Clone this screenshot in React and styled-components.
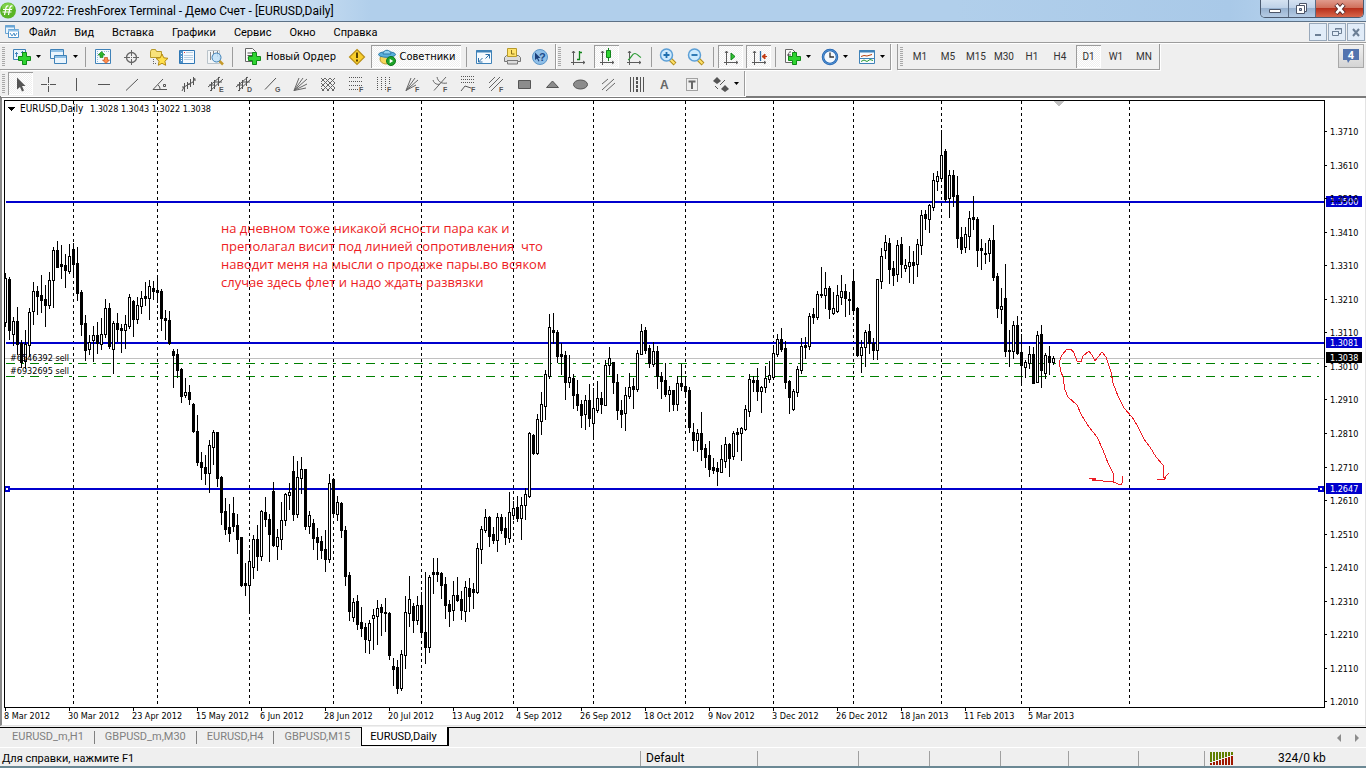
import React from "react";
import styled, { createGlobalStyle, css } from "styled-components";

const UI = `"Roboto", "Liberation Sans", sans-serif`;
const CHART = `"DejaVu Sans Condensed", "DejaVu Sans", sans-serif`;

// [high, body top, body bottom, low, rising]
const candles = [
  [273, 278, 322, 326, 1], [277, 279, 330, 339, 0], [317, 321, 334, 345, 1], [307, 321, 344, 354, 0],
  [340, 343, 362, 367, 0], [330, 344, 361, 368, 1], [308, 312, 345, 356, 1], [282, 291, 311, 324, 1],
  [286, 291, 296, 314, 0], [275, 295, 300, 312, 0], [285, 299, 305, 326, 0], [272, 280, 305, 308, 1],
  [247, 250, 280, 307, 1], [241, 250, 267, 267, 0], [245, 264, 266, 278, 0], [254, 265, 270, 287, 0],
  [244, 256, 271, 273, 1], [243, 249, 264, 275, 0], [247, 263, 293, 300, 0], [290, 292, 324, 335, 0],
  [315, 323, 350, 360, 0], [335, 342, 349, 354, 1], [326, 335, 340, 361, 1], [322, 335, 343, 353, 0],
  [318, 334, 344, 349, 1], [299, 308, 334, 337, 1], [303, 308, 346, 348, 0], [321, 323, 349, 373, 1],
  [313, 323, 329, 341, 0], [324, 328, 330, 352, 0], [315, 324, 330, 348, 1], [294, 297, 326, 328, 1],
  [300, 301, 319, 336, 0], [297, 305, 319, 323, 1], [291, 298, 306, 313, 1], [282, 296, 298, 305, 0],
  [280, 286, 298, 319, 1], [281, 288, 291, 299, 0], [275, 290, 292, 302, 0], [289, 291, 318, 330, 0],
  [310, 318, 320, 339, 0], [311, 320, 343, 344, 0], [349, 351, 355, 387, 0], [349, 354, 370, 377, 0],
  [368, 369, 396, 402, 0], [378, 392, 395, 397, 1], [385, 392, 399, 404, 0], [403, 404, 431, 432, 0],
  [415, 431, 462, 465, 0], [452, 462, 467, 479, 0], [455, 467, 473, 484, 0], [440, 445, 473, 492, 1],
  [430, 432, 447, 464, 1], [432, 432, 478, 486, 0], [476, 477, 512, 524, 0], [498, 511, 529, 534, 0],
  [504, 527, 533, 541, 0], [497, 513, 526, 531, 0], [514, 525, 539, 553, 0], [537, 537, 585, 586, 0],
  [563, 583, 585, 595, 0], [550, 561, 585, 612, 1], [535, 539, 567, 578, 1], [525, 539, 556, 570, 0],
  [510, 511, 556, 560, 1], [497, 512, 519, 526, 0], [514, 519, 534, 561, 0], [482, 491, 545, 546, 0],
  [529, 537, 546, 559, 1], [502, 520, 539, 549, 1], [493, 494, 520, 525, 1], [483, 492, 495, 509, 1],
  [456, 471, 514, 520, 0], [461, 477, 514, 517, 1], [457, 469, 478, 493, 1], [469, 469, 526, 529, 0],
  [511, 515, 526, 533, 1], [519, 523, 538, 549, 0], [528, 537, 542, 559, 0], [536, 541, 550, 558, 0],
  [530, 549, 559, 571, 0], [474, 483, 559, 562, 1], [478, 479, 513, 516, 0], [496, 502, 514, 520, 1],
  [502, 503, 530, 537, 0], [526, 530, 576, 585, 0], [572, 575, 611, 620, 0], [598, 602, 617, 621, 1],
  [595, 601, 624, 629, 0], [607, 622, 628, 636, 0], [623, 627, 639, 652, 0], [620, 623, 640, 653, 1],
  [609, 615, 618, 649, 1], [600, 608, 616, 644, 1], [604, 607, 612, 635, 0], [598, 612, 613, 631, 0],
  [612, 613, 655, 659, 0], [658, 666, 669, 685, 0], [660, 667, 688, 693, 0], [650, 654, 688, 690, 1],
  [596, 612, 655, 668, 1], [576, 599, 613, 626, 1], [603, 606, 620, 632, 0], [596, 605, 620, 624, 1],
  [592, 605, 632, 637, 0], [572, 632, 647, 663, 0], [575, 577, 647, 652, 1], [558, 572, 574, 593, 0],
  [558, 572, 574, 581, 0], [572, 573, 585, 598, 0], [577, 584, 605, 618, 0], [600, 604, 611, 626, 0],
  [581, 595, 610, 620, 1], [577, 595, 600, 601, 0], [591, 599, 610, 619, 0], [581, 587, 611, 621, 1],
  [578, 588, 596, 611, 0], [583, 589, 592, 608, 0], [543, 548, 592, 593, 1], [526, 529, 549, 563, 1],
  [509, 517, 530, 532, 1], [516, 517, 536, 546, 0], [527, 534, 540, 543, 0], [513, 517, 540, 551, 1],
  [514, 517, 530, 533, 0], [517, 528, 537, 544, 0], [492, 512, 538, 542, 1], [501, 508, 515, 519, 1],
  [496, 507, 518, 521, 0], [497, 505, 518, 539, 1], [488, 494, 505, 519, 1], [432, 433, 496, 497, 1],
  [434, 435, 453, 454, 0], [414, 419, 453, 454, 1], [392, 404, 421, 434, 1], [370, 374, 406, 419, 1],
  [314, 327, 376, 378, 1], [313, 330, 332, 343, 0], [330, 332, 356, 362, 0], [343, 354, 356, 374, 0],
  [351, 355, 382, 399, 0], [355, 377, 382, 387, 1], [374, 378, 395, 408, 0], [380, 394, 405, 410, 0],
  [400, 404, 415, 427, 0], [395, 400, 414, 429, 1], [384, 400, 418, 426, 0], [388, 408, 423, 437, 1],
  [381, 398, 410, 412, 1], [392, 398, 404, 413, 0], [360, 365, 405, 405, 1], [347, 358, 365, 374, 1],
  [362, 362, 382, 393, 0], [374, 382, 410, 419, 0], [400, 410, 414, 427, 0], [387, 395, 413, 430, 1],
  [373, 387, 396, 398, 1], [378, 386, 389, 408, 0], [350, 353, 389, 391, 1], [324, 331, 354, 354, 1],
  [327, 330, 350, 353, 0], [345, 348, 363, 367, 0], [342, 351, 364, 366, 1], [346, 351, 376, 388, 0],
  [372, 376, 381, 398, 0], [363, 380, 394, 396, 0], [386, 390, 394, 411, 1], [390, 390, 404, 410, 0],
  [376, 383, 404, 410, 1], [364, 383, 386, 390, 0], [376, 386, 391, 395, 0], [387, 390, 427, 432, 0],
  [423, 432, 440, 450, 0], [429, 433, 440, 451, 1], [412, 433, 449, 460, 0], [444, 448, 457, 467, 0],
  [441, 455, 469, 476, 0], [458, 467, 470, 473, 0], [462, 468, 471, 485, 0], [445, 459, 472, 472, 1],
  [437, 444, 461, 467, 1], [443, 444, 458, 476, 0], [431, 433, 456, 459, 1], [428, 432, 434, 451, 0],
  [427, 428, 433, 460, 1], [405, 409, 429, 430, 1], [374, 379, 411, 416, 1], [376, 380, 382, 391, 0],
  [368, 380, 391, 400, 0], [386, 387, 391, 412, 1], [366, 378, 387, 392, 1], [361, 375, 379, 382, 1],
  [345, 353, 377, 378, 1], [334, 339, 354, 356, 1], [328, 339, 349, 351, 0], [341, 348, 382, 388, 0],
  [380, 381, 397, 413, 0], [389, 391, 409, 410, 1], [366, 369, 392, 396, 1], [338, 346, 370, 373, 1],
  [337, 345, 347, 358, 0], [313, 316, 346, 349, 1], [308, 314, 317, 323, 0], [291, 294, 317, 319, 1],
  [267, 294, 295, 297, 0], [272, 288, 295, 308, 1], [286, 288, 309, 318, 0], [292, 308, 313, 314, 1],
  [285, 295, 311, 312, 1], [275, 291, 297, 304, 1], [284, 291, 298, 316, 0], [292, 299, 300, 314, 0],
  [272, 281, 310, 314, 0], [307, 308, 355, 356, 0], [340, 347, 355, 372, 1], [330, 332, 347, 366, 1],
  [324, 331, 343, 353, 0], [338, 343, 350, 359, 0], [279, 279, 350, 359, 1], [248, 256, 281, 288, 1],
  [235, 242, 250, 258, 1], [238, 243, 269, 283, 0], [261, 268, 275, 285, 0], [240, 245, 274, 281, 1],
  [237, 244, 264, 277, 0], [259, 265, 268, 271, 1], [246, 262, 266, 282, 1], [251, 262, 265, 283, 0],
  [239, 244, 264, 276, 1], [210, 215, 245, 254, 1], [210, 214, 218, 229, 0], [204, 205, 219, 232, 1],
  [173, 180, 207, 210, 1], [171, 176, 181, 190, 1], [130, 155, 178, 181, 1], [149, 151, 199, 201, 0],
  [170, 175, 198, 217, 1], [170, 175, 196, 206, 0], [176, 195, 238, 247, 0], [227, 237, 249, 253, 0],
  [227, 234, 247, 252, 1], [211, 218, 236, 249, 1], [196, 217, 219, 229, 0], [217, 219, 250, 266, 0],
  [239, 248, 250, 269, 0], [243, 253, 254, 263, 0], [238, 240, 253, 261, 1], [225, 240, 277, 280, 0],
  [273, 276, 308, 317, 0], [288, 306, 309, 323, 1], [264, 298, 351, 356, 0], [330, 350, 351, 366, 0],
  [321, 325, 351, 358, 1], [316, 325, 353, 354, 0], [334, 352, 365, 385, 0], [360, 362, 367, 377, 1],
  [346, 354, 363, 368, 1], [347, 354, 383, 383, 0], [331, 335, 382, 382, 1], [325, 334, 370, 387, 0],
  [353, 355, 373, 378, 1], [346, 356, 362, 374, 0], [356, 358, 362, 364, 1],
];

const months = [73, 157, 249, 333, 421, 513, 593, 685, 773, 853, 941, 1021, 1129];
const levels = [201, 342, 488];
const orders = [
  { id: "#6546392 sell", y: 363 },
  { id: "#6932695 sell", y: 376 },
];
const note = [
  "на дневном тоже никакой ясности пара как и",
  "преполагал висит под линией сопротивления  что",
  "наводит меня на мысли о продаже пары.во всяком",
  "случае здесь флет и надо ждать развязки",
];
const prices = [
  "1.3710", "1.3610", "1.3510", "1.3410", "1.3310", "1.3210", "1.3110", "1.3010", "1.2910",
  "1.2810", "1.2710", "1.2610", "1.2510", "1.2410", "1.2310", "1.2210", "1.2110", "1.2010",
];
const tags = [
  { text: "1.3500", y: 202, fill: "#0000cd" },
  { text: "1.3081", y: 343, fill: "#0000cd" },
  { text: "1.3038", y: 358, fill: "#000" },
  { text: "1.2647", y: 489, fill: "#0000cd" },
];
const dates = [
  "8 Mar 2012", "30 Mar 2012", "23 Apr 2012", "15 May 2012", "6 Jun 2012", "28 Jun 2012", "20 Jul 2012",
  "13 Aug 2012", "4 Sep 2012", "26 Sep 2012", "18 Oct 2012", "9 Nov 2012", "3 Dec 2012", "26 Dec 2012",
  "18 Jan 2013", "11 Feb 2013", "5 Mar 2013",
];
const menu = ["Файл", "Вид", "Вставка", "Графики", "Сервис", "Окно", "Справка"];
const frames = ["M1", "M5", "M15", "M30", "H1", "H4", "D1", "W1", "MN"];
const tabs = ["EURUSD_m,H1", "GBPUSD_m,M30", "EURUSD,H4", "GBPUSD,M15", "EURUSD,Daily"];

const Icon = ({ children, size = 20 }) => (
  <svg width={size} height={size} viewBox={`0 0 ${size} ${size}`} fill="none" aria-hidden="true">
    {children}
  </svg>
);

const Plus = () => (
  <path d="M9.5 5.5h4v4h4v4h-4v4h-4v-4h-4v-4h4z" fill="#2fd431" stroke="#118a18" />
);
const Axes = () => (
  <path d="M5.500 4v14M3 15.500h14M4 6l1.500-2 1.500 2M15 14l2 1.500-2 1.500" stroke="#5a5a5a" />
);
const Lens = ({ minus }) => (
  <>
    <path d="M12 12l5 5" stroke="#b08a1a" strokeWidth="4" />
    <path d="M12 12l4.500 4.500" stroke="#ffe36b" strokeWidth="2" />
    <circle cx="8.500" cy="8" r="6" fill="#cdeafd" stroke="#5c9fd6" strokeWidth="1.500" />
    <path d={minus ? "M5.500 8h6" : "M5.500 8h6M8.500 5v6"} stroke="#1f6fae" strokeWidth="1.800" />
  </>
);
const F = ({ ch = "F" }) => (
  <text x="13" y="18" fontSize="7" fontWeight="700" fontFamily="Liberation Sans, sans-serif" fill="#555">
    {ch}
  </text>
);

const MAIN = {
  newChart: (
    <>
      <path d="M.5 2.500h12v10H.5z" fill="#eaf5fd" stroke="#3f82b8" />
      <path d="M3.500 5v5M2 6.500h3M9.500 4v5M8 5.500h3" stroke="#3f82b8" />
      <Plus />
    </>
  ),
  profiles: (
    <>
      <path d="M.5 2.500h13v9h-13z" fill="#eaf5fd" stroke="#3f82b8" />
      <path d="M1 4h12" stroke="#8fc0e6" strokeWidth="2" />
      <path d="M4.500 8.500h12v8h-12z" fill="#eaf5fd" stroke="#3f82b8" />
      <path d="M5 10h11" stroke="#8fc0e6" strokeWidth="2" />
    </>
  ),
  market: (
    <>
      <path d="M2.500 2.500h15v14h-15z" fill="#f5fafe" stroke="#3f82b8" />
      <path d="M4.500 4v12M9 4.500h8" stroke="#8fb8d8" strokeDasharray="1 1" />
      <path d="M8.500 4.500l3.500 3.500h-2v2.500H7V8H5z" fill="#2bb52d" stroke="#137a18" strokeWidth=".6" />
      <path d="M13 16.500l3.500-3.500h-2v-2.500h-3V13h-2z" fill="#ff8b4a" stroke="#b5400d" strokeWidth=".6" />
    </>
  ),
  data: (
    <>
      <circle cx="10.500" cy="10.500" r="5" stroke="#666" strokeWidth="1.300" />
      <path d="M10.500 3v6M10.500 12v6M3 10.500h6M12 10.500h6M10 10.500h1" stroke="#666" />
    </>
  ),
  navigator: (
    <>
      <path d="M1.500 4.500l1-2h4l1 2h5v6h-11z" fill="#f8e27a" stroke="#b79a2b" />
      <path d="M4.500 12v5M4 16.500h4" stroke="#666" strokeDasharray="1 1" />
      <path d="M13 7l1.800 3.800 4.200.5-3.100 2.900.8 4.100-3.700-2-3.700 2 .8-4.100L7 11.300l4.200-.5z" fill="#ffe14d" stroke="#b58a12" />
    </>
  ),
  terminal: (
    <>
      <path d="M2.500 3.500h15v13h-15z" fill="#f5faff" stroke="#2f77b4" />
      <path d="M3 4h3v12H3z" fill="#4d90c8" />
      <path d="M4.500 6v2M4.500 9v5" stroke="#fff" strokeDasharray="1 1" />
      <path d="M7 5.500h1" stroke="#e33" />
      <path d="M9 5.500h7M7 8.500h9M7 10.500h9M7 12.500h9" stroke="#b9d0e2" />
    </>
  ),
  tester: (
    <>
      <path d="M2.500 3.500h12v13h-12z" fill="#f2f5f7" stroke="#b9c3ca" />
      <path d="M5.500 5v8M8.500 4v5M12.500 4v6" stroke="#888" />
      <path d="M14 13.500l4 4" stroke="#c69a2b" strokeWidth="2.500" />
      <circle cx="11.500" cy="10.500" r="4.500" fill="#bfe0f8" fillOpacity=".85" stroke="#3f82b8" />
    </>
  ),
  order: (
    <>
      <path d="M2.500 1.500h7l3 3v10h-10z" fill="#fafafa" stroke="#666" />
      <path d="M4.500 6h6M4.500 8.500h6M4.500 11h5" stroke="#555" />
      <Plus />
    </>
  ),
  warn: (
    <>
      <path d="M10 2.500l7.500 7.500-7.500 7.500L2.500 10z" fill="#f9cf2c" stroke="#b9901a" strokeWidth="1.200" />
      <path d="M10 5.500v5.500M10 12.500v2" stroke="#5a4300" strokeWidth="2" />
    </>
  ),
  expert: (
    <>
      <ellipse cx="9" cy="12" rx="6" ry="5" fill="#f6d65a" stroke="#b79a2b" />
      <ellipse cx="10" cy="7.500" rx="8.500" ry="2.800" fill="#5ab0dc" stroke="#2c7ba8" />
      <path d="M6 7c0-5 8-5 8 0z" fill="#8fd0ef" stroke="#2c7ba8" />
      <circle cx="14" cy="14" r="4.500" fill="#1ea32a" stroke="#0e7a18" />
      <path d="M12.700 11.800l3.500 2.200-3.500 2.200z" fill="#fff" />
    </>
  ),
  full: (
    <>
      <path d="M2.500 3.500h15v13h-15z" fill="#f5fafe" stroke="#3f82b8" />
      <path d="M2 4.500h16" stroke="#3f82b8" strokeWidth="2" />
      <path d="M11.500 7.500h4v4M15.500 7.500l-4 4M4.500 11v4h4M4.500 15l4-4" stroke="#2b6ea8" />
    </>
  ),
  print: (
    <>
      <path d="M4.500 8.500h12l2 2v4h-3v2.500h-10v-2.500h-3v-4z" fill="#dcdcdc" stroke="#777" />
      <path d="M5.500 1.500h9v8h-9z" fill="#ffe36b" stroke="#b79a2b" />
      <path d="M9.500 3v4h3" stroke="#8c7218" />
      <path d="M5 13.500h11" stroke="#777" />
    </>
  ),
  help: (
    <>
      <circle cx="10" cy="10" r="7.500" fill="#8fbfe8" stroke="#5c96c8" />
      <path d="M5 5.500v7.500l2-1.500 1.500 3 1-.5-1.500-3h2.500z" fill="#1b3f7a" />
      <text x="9" y="14" fontSize="11" fontWeight="700" fontFamily="Liberation Sans, sans-serif" fill="#1b4c8c">?</text>
    </>
  ),
  bars: (
    <>
      <Axes />
      <path d="M11.500 4v9M11 5.500h3M9 12.500h3" stroke="#11841a" strokeWidth="1.300" />
    </>
  ),
  candles: (
    <>
      <Axes />
      <path d="M11.500 1v13" stroke="#11841a" />
      <path d="M9.500 3.500h4v7h-4z" fill="#2fd431" stroke="#11841a" />
    </>
  ),
  line: (
    <>
      <Axes />
      <path d="M4 13c3-1 4-7 7-6.500s3 2.500 6 4" stroke="#2a9a34" strokeWidth="1.200" />
    </>
  ),
  zoomIn: <Lens />,
  zoomOut: <Lens minus />,
  scroll: (
    <>
      <Axes />
      <path d="M10 6v7l4-3.500z" fill="#2fc431" stroke="#11841a" />
    </>
  ),
  shift: (
    <>
      <Axes />
      <path d="M11.500 4v10" stroke="#2b6ea8" strokeWidth="1.300" />
      <path d="M18 9.500h-4M16 7l-3 2.500 3 2.500z" stroke="#c23b12" fill="#c23b12" />
    </>
  ),
  indicators: (
    <>
      <path d="M2.500 2.500h7l3 3v10h-10z" fill="#fafafa" stroke="#666" />
      <path d="M8 5c-2-.5-2.500 1-2.500 3v4M4 8h4" stroke="#555" />
      <Plus />
    </>
  ),
  clock: (
    <>
      <circle cx="10" cy="10" r="7" fill="#f4f9fd" stroke="#1d5fae" strokeWidth="2.500" />
      <circle cx="10" cy="10" r="7" stroke="#69a9e2" strokeWidth=".8" />
      <path d="M10 5.500V10h4" stroke="#333" strokeWidth="1.300" />
    </>
  ),
  template: (
    <>
      <path d="M2.500 3.500h15v13h-15z" fill="#f8fcff" stroke="#3f82b8" />
      <path d="M2 4.500h16" stroke="#3f82b8" strokeWidth="2" />
      <path d="M2 11.500h16" stroke="#3f82b8" />
      <path d="M4 9.500l3-1 3 .5 5-1.500" stroke="#b5400d" />
      <path d="M4 14.500l3-1.500 3 1.500 3-2 3 1" stroke="#2a9a34" />
    </>
  ),
};

const DRAW = [
  ["Курсор", <path d="M6 3.500v12l3-2.500 2 4.500 2-1-2-4.500h3.500z" fill="#555" />],
  ["Перекрестие", <path d="M3 10.500h6M12 10.500h6M10.500 3v6M10.500 12v6M10 10.500h1" stroke="#555" />],
  ["Вертикальная линия", <path d="M10.500 4v13" stroke="#555" />],
  ["Горизонтальная линия", <path d="M4 10.500h12" stroke="#555" />],
  ["Трендовая линия", <path d="M4 16.500L16 5" stroke="#555" />],
  ["Трендовая линия по углу", <path d="M13 5L3 15.500h14M8 11c1.500 1 2 3 2 4M13.500 10.500h2v2h-2z" stroke="#555" />],
  ["Регрессия", <path d="M4 17l2-4 9-5 2-4M6.500 9v9M9.500 8v7M12.500 5v8M15.500 3v8M4 13h3M9 10h3M15 6h3" stroke="#555" />],
  ["Равноудаленный канал", <><path d="M2 13L14 3M4 17L17 5M5.500 8v9M8.500 6v9M12.500 3v9M3 11h6M9 8h7" stroke="#555" /><F ch="E" /></>],
  ["Канал отклонений", <><path d="M2 13L14 3M4 17L17 5M5.500 8v9M8.500 6v9M12.500 3v9M3 11h6M9 8h7" stroke="#555" /><F ch="D" /></>],
  ["Линия Ганна", <><path d="M3 15.500L14 4" stroke="#555" /><F ch="G" /></>],
  ["Веер Ганна", <path d="M4 16.500L9 4M4 16.500L13 4M4 16.500L17 5M4 16.500L17 10M4 16.500L16 14" stroke="#666" />],
  ["Сетка Ганна", <path d="M3 4l13 13M3 9l8 8M7 4l10 10M12 4l5 5M3 14l3 3M3 8l4-4M3 13l9-9M4 17L17 4M9 17l8-8M14 17l3-3" stroke="#666" />],
  ["Линии Фибоначчи", <><path d="M3 3.500h14M3 7.500h14M3 11.500h14M3 15.500h9" stroke="#555" strokeDasharray="1 1" /><F /></>],
  ["Временные зоны Фибоначчи", <><path d="M3.500 3v13M7.500 3v13M11.500 3v13M15.500 3v8" stroke="#555" strokeDasharray="1 1" /><F /></>],
  ["Веер Фибоначчи", <><path d="M4 16.500L9 4M4 16.500L13 4M4 16.500L16 6M4 16.500L14 11" stroke="#666" /><F /></>],
  ["Дуги Фибоначчи", <><path d="M4 16.500L16 3M3 6c1 4 5 5 7 4M7 3c1 5 5 7 10 6" stroke="#666" /><F /></>],
  ["Расширение Фибоначчи", <><path d="M3 2.500h14M3 5.500h14M3 8.500h14" stroke="#555" strokeDasharray="1 1" /><path d="M3 17l4-5 6 2" stroke="#555" /><F /></>],
  ["Канал Фибоначчи", <><path d="M3 9l6-6M3 14L14 3M5 17L17 5" stroke="#666" /><F /></>],
  ["Прямоугольник", <path d="M4.500 6.500h12v8h-12z" fill="#8c8c8c" stroke="#555" />],
  ["Треугольник", <path d="M10.500 7l6 6.500h-12z" fill="#8c8c8c" stroke="#555" />],
  ["Эллипс", <ellipse cx="10.500" cy="10.500" rx="7" ry="4.500" fill="#8c8c8c" stroke="#555" />],
  ["Вилы Эндрюса", <path d="M4 10l6-5M4 16L16 5M8 17l9-8" stroke="#666" />],
  ["Циклические линии", <><path d="M4.500 3v15M7.500 3v15M14.500 3v15M17.500 3v15" stroke="#555" /><path d="M11 3v15" stroke="#555" strokeWidth="2" strokeDasharray="3 1" /></>],
  ["Текст", <text x="6" y="15" fontSize="12" fontWeight="700" fontFamily="Liberation Sans, sans-serif" fill="#666">A</text>],
  ["Текстовая метка", <><path d="M4.500 4.500h11v12h-11z" stroke="#555" strokeDasharray="1 1" /><path d="M6.500 7.500h7M10 7v8" stroke="#666" strokeWidth="2" /></>],
];

export default function App() {
  return (
    <>
      <Global />
      <Window>
        <TitleBar>
          <AppLogo />
          <Title>209722: FreshForex Terminal - Демо Счет - [EURUSD,Daily]</Title>
          <WinButtons>
            <WinButton aria-label="Свернуть">
              <svg width="14" height="12"><path d="M1.500 6.500h11v3h-11z" fill="#fff" stroke="#4c5568" /></svg>
            </WinButton>
            <WinButton aria-label="Развернуть">
              <svg width="14" height="13">
                <path d="M4.500 1.500h7v8h-7z" fill="#fff" stroke="#4c5568" />
                <path d="M1.500 3.500h8v8h-8z" fill="#fff" stroke="#4c5568" />
                <path d="M4.500 6.500h2v2h-2z" stroke="#4c5568" fill="#a8bdd6" />
              </svg>
            </WinButton>
            <WinButton $close aria-label="Закрыть">
              <svg width="14" height="12">
                <path d="M3 1.500l8 9M11 1.500l-8 9" stroke="#5a2a2a" strokeWidth="4.500" />
                <path d="M3.300 1.800l7.400 8.400M10.700 1.800l-7.400 8.400" stroke="#fff" strokeWidth="2.600" />
              </svg>
            </WinButton>
          </WinButtons>
        </TitleBar>

        <MenuBar>
          <ChartLogo />
          {menu.map((m) => (
            <MenuItem key={m}>{m}</MenuItem>
          ))}
          <MdiButtons>
            <MdiButton aria-label="Свернуть окно">
              <svg width="12" height="12"><path d="M3 9h6" stroke="#6c7f95" strokeWidth="2" /></svg>
            </MdiButton>
            <MdiButton aria-label="Восстановить окно">
              <svg width="12" height="12" fill="none">
                <path d="M4.500 4V2.500h6v5H8M1.500 5.500h6v4h-6zM4 3h7M1 5.500h7" stroke="#6c7f95" />
              </svg>
            </MdiButton>
            <MdiButton aria-label="Закрыть окно">
              <svg width="12" height="12"><path d="M3 3l6 7M9 3l-6 7" stroke="#6c7f95" strokeWidth="2" /></svg>
            </MdiButton>
          </MdiButtons>
        </MenuBar>

        <ToolRow>
          <Group>
            <Grip $wide />
            <Tool icon="newChart" label="Новый график" drop />
            <Tool icon="profiles" label="Профили" drop />
            <Sep $wide />
            <Tool icon="market" label="Обзор рынка" />
            <Tool icon="data" label="Окно данных" />
            <Tool icon="navigator" label="Навигатор" />
            <Tool icon="terminal" label="Терминал" />
            <Tool icon="tester" label="Тестер стратегий" />
            <Sep $wide />
            <TextTool $width={107}>
              <Icon>{MAIN.order}</Icon>
              Новый Ордер
            </TextTool>
            <Tool icon="warn" label="MetaEditor" />
            <TextTool $width={90} $on>
              <Icon>{MAIN.expert}</Icon>
              Советники
            </TextTool>
            <Sep $wide />
            <Tool icon="full" label="Полный экран" />
            <Tool icon="print" label="Печать" />
            <Tool icon="help" label="Помощь" />
          </Group>
          <Group>
            <Grip $wide />
            <Tool icon="bars" label="Бары" />
            <Tool icon="candles" label="Свечи" on />
            <Tool icon="line" label="Линия" />
            <Sep />
            <Tool icon="zoomIn" label="Увеличить" />
            <Tool icon="zoomOut" label="Уменьшить" />
            <Sep />
            <Tool icon="scroll" label="Автопрокрутка" on />
            <Tool icon="shift" label="Сдвиг графика" on />
            <Sep />
            <Tool icon="indicators" label="Индикаторы" drop />
            <Tool icon="clock" label="Периоды" drop />
            <Tool icon="template" label="Шаблоны" drop />
          </Group>
          <Group $apart>
            <Grip $wide />
            {frames.map((f) => (
              <ToolButton key={f} $on={f === "D1"}>{f}</ToolButton>
            ))}
          </Group>
          <NewsButton aria-label="Сообщения">
            <svg width="18" height="18">
              <path d="M1 2h16v11H8l-2 3-1-3H1z" fill="#5273ae" />
              <text x="9" y="12" textAnchor="middle" fontSize="11" fontWeight="700" fill="#fff">4</text>
            </svg>
          </NewsButton>
        </ToolRow>

        <ToolRow $last>
          <Group $last>
            <Grip />
            {DRAW.map(([label, drawing], i) => (
              <ToolButton key={label} aria-label={label} $on={i === 0}>
                <Icon>{drawing}</Icon>
              </ToolButton>
            ))}
            <ToolButton $drop aria-label="Стрелки">
              <Icon>
                <path d="M6 3l4 4-4 3-4-3zM14 18l-4-3 4-4 4 4z" fill="#555" />
                <path d="M4 12l3 3M9 11l5-5" stroke="#555" />
              </Icon>
              <Arrow />
            </ToolButton>
          </Group>
        </ToolRow>

        <ChartWindow>
          <Plot>
            <Chart />
          </Plot>
          <PriceAxis />
          <DateAxis>
            {dates.map((d) => (
              <DateLabel key={d}>{d}</DateLabel>
            ))}
          </DateAxis>
        </ChartWindow>

        <TabBar>
          {tabs.map((t, i) => (
            <Tab key={t} $active={i === 4} $rule={i < 3}>{t}</Tab>
          ))}
          <TabScroll>
            <ScrollButton aria-label="Назад"><svg width="5" height="8"><path d="M4 0v8L0 4z" fill="#8c8c8c" /></svg></ScrollButton>
            <ScrollButton aria-label="Вперед"><svg width="5" height="8"><path d="M1 0v8l4-4z" fill="#8c8c8c" /></svg></ScrollButton>
          </TabScroll>
        </TabBar>

        <StatusBar>
          <StatusText>Для справки, нажмите F1</StatusText>
          <StatusCell $width={117}>Default</StatusCell>
          <StatusCell $width={101} />
          <StatusCell $width={71} />
          <StatusCell $width={71} />
          <StatusCell $width={68} />
          <StatusCell $width={70} />
          <StatusCell $width={66} />
          <StatusCell $width={162}>
            <Signal />
            <Traffic>324/0 kb</Traffic>
          </StatusCell>
        </StatusBar>
      </Window>
    </>
  );
}

function Tool({ icon, label, drop, on }) {
  return (
    <ToolButton aria-label={label} $drop={drop} $on={on}>
      <Icon>{MAIN[icon]}</Icon>
      {drop && <Arrow />}
    </ToolButton>
  );
}

function Arrow() {
  return (
    <svg width="5" height="3" aria-hidden="true">
      <path d="M0 0h5L2.500 3z" fill="#000" />
    </svg>
  );
}

function AppLogo() {
  return (
    <svg width="17" height="17" viewBox="0 0 17 17" fill="none" aria-hidden="true">
      <circle cx="8" cy="8.500" r="8" fill="#58b527" />
      <ellipse cx="8" cy="5" rx="6" ry="4" fill="#8fdc5a" fillOpacity=".7" />
      <path d="M8.500 4c-2-.5-2.500 1-3 4l-1 5M12.500 4c-2-.5-2.500 1-3 4l-1 5M3 7.500h9M2.500 10h9" stroke="#fff" strokeWidth="1.200" />
    </svg>
  );
}

function ChartLogo() {
  return (
    <svg width="16" height="16" fill="none" aria-hidden="true">
      <path d="M1.500 1.500h9v8h-9z" fill="#eaf5fd" stroke="#6ba5d3" />
      <path d="M1 2.500h10" stroke="#6ba5d3" strokeWidth="2" />
      <path d="M4.500 5.500h10v8h-10z" fill="#fff" stroke="#4f93c9" />
      <path d="M4 6.500h11" stroke="#8fc0e6" strokeWidth="2" />
      <path d="M6 9l2 3 2-3 1 3 2-3" stroke="#4f93c9" />
    </svg>
  );
}

function Signal() {
  return (
    <svg width="24" height="13" shapeRendering="crispEdges" aria-hidden="true">
      {[...Array(8)].map((_, i) => (
        <g key={i}>
          <rect x={i * 3} y="0" width="2" height={10 - i} fill="#5f7f00" />
          <rect x={i * 3} y={11 - i} width="2" height={2 + i} fill="#a01800" />
        </g>
      ))}
    </svg>
  );
}

function Chart() {
  return (
    <svg width="100%" height="100%">
      {/* chart space starts at (5, 101), one candle every 4px */}
      <g transform="translate(-5 -101)" shapeRendering="crispEdges">
        <g fontSize="13" fontFamily="Open Sans, Noto Sans, sans-serif" fill="#ed1c24">
          {note.map((line, i) => (
            <text key={line} x="221" y={233 + i * 18} xmlSpace="preserve">{line}</text>
          ))}
        </g>
        {months.map((x) => (
          <line key={x} x1={x + 0.5} x2={x + 0.5} y1="101" y2="120%" stroke="#000" strokeDasharray="3 3" />
        ))}
        <rect x="5" y="358" width="101%" height="1" fill="#c0c0c0" />
        {orders.map((o) => (
          <line key={o.id} x1="6" x2="100%" y1={o.y + 0.5} y2={o.y + 0.5} stroke="#008000" strokeDasharray="9 6 3 6" />
        ))}
        {levels.map((y) => (
          <rect key={y} x="6" y={y} width="101%" height="2" fill="#0000cd" />
        ))}
        {candles.map(([high, top, bottom, low, up], i) => {
          const x = 5 + i * 4;
          return (
            <g key={i}>
              <rect x={x} y={high} width="1" height={low - high + 1} />
              <rect x={x - 1} y={top} width="3" height={bottom - top + 1} />
              {up === 1 && <rect x={x} y={top + 1} width="1" height={bottom - top - 1} fill="#fff" />}
            </g>
          );
        })}
        <rect x="5" y="487" width="4" height="4" fill="#fff" stroke="#0000cd" strokeWidth="2" />
        <svg x="100%" width="10" height="900" overflow="visible">
          <rect x="0" y="487" width="4" height="4" fill="#fff" stroke="#0000cd" strokeWidth="2" />
        </svg>
        <path d="M1053 101h11l-5 5h-1z" fill="#c0c0c0" />
        <g stroke="#ed1c24" fill="none">
          <path d="M1059 362L1062 355L1067 349L1071 349L1074 353L1077 361L1081 362L1083 356L1089 351L1092 355L1095 361L1098 357L1102 352L1106 357L1111 372L1113 383L1118 396L1124 408L1132 417L1137 425L1144 439L1150 447L1156 457L1163 465L1163 476L1164 478L1169 473M1157 479L1164 480L1166 477" />
          <path d="M1059 362L1061 372L1063 377L1065 390L1068 397L1077 405L1082 416L1089 427L1097 437L1103 450L1108 463L1113 473L1113 482M1089 478L1096 479L1092 480L1103 481L1113 482L1121 485L1122 483L1122 476" />
        </g>
        <path d="M8 107h7l-3 4h-1z" />
        <text x="20" y="112" fontSize="10">EURUSD,Daily</text>
        <text x="90" y="112">1.3028 1.3043 1.3022 1.3038</text>
        {orders.map((o) => (
          <text key={o.id} x="10" y={o.y - 2}>{o.id}</text>
        ))}
      </g>
    </svg>
  );
}

function PriceAxis() {
  return (
    <AxisSvg>
      {tags.map((t) => (
        <g key={t.text}>
          <rect x="1" y={t.y - 106} width="36" height="11" fill={t.fill} />
          <text x="5" y={t.y - 97} fill="#fff">{t.text}</text>
        </g>
      ))}
      {prices.map((p, i) => {
        const y = Math.round(31 + i * 33.55);
        return (
          <g key={p}>
            <rect x="0" y={y} width="2" height="1" />
            <text x="5" y={y + 4}>{p}</text>
          </g>
        );
      })}
    </AxisSvg>
  );
}

const Global = createGlobalStyle`
  * {
    box-sizing: border-box;
  }
  body {
    margin: 0;
    overflow: hidden;
    font-family: ${UI};
    font-size: 12px;
    color: #000;
    background: #f0f0f0;
  }
  button {
    font: inherit;
    color: inherit;
    background: none;
    border: 0;
    padding: 0;
    margin: 0;
  }
  svg {
    display: block;
    flex-shrink: 0;
  }
`;

const pressed = css`
  background: repeating-conic-gradient(#fff 0 25%, #efefef 0 50%) 0 0 / 2px 2px;
  box-shadow: inset 1px 1px #9c9c9c, inset -1px -1px #fff;
`;

const Window = styled.div`
  display: flex;
  flex-direction: column;
  height: 100vh;
  background: #efefef;
  border-bottom: 2px solid #6b8894;
`;

const TitleBar = styled.header`
  display: flex;
  align-items: center;
  gap: 4px;
  height: 22px;
  background: linear-gradient(90deg, #d9e8f6 0, #cfe1f3 280px, #b1cfeb 370px, #b1cfeb 70%, #a9c9e8 90%, #c3daf0 100%);
  border-bottom: 1px solid #5d7186;
`;

const Title = styled.span`
  font-size: 12px;
  white-space: nowrap;
`;

const WinButtons = styled.div`
  display: flex;
  align-self: flex-start;
  margin-left: auto;
  margin-right: 2px;
  border: 1px solid #4b5a70;
  border-top: 0;
  border-radius: 0 0 5px 5px;
  overflow: hidden;
`;

const WinButton = styled.button`
  display: flex;
  align-items: center;
  justify-content: center;
  width: ${(p) => (p.$close ? 48 : 27)}px;
  height: 17px;
  background: ${(p) =>
    p.$close
      ? "linear-gradient(#e09a8c 0, #d0705c 45%, #b8301c 50%, #d8664a 100%)"
      : "linear-gradient(#d5e2f1 0, #bfd2e8 45%, #98b2d0 50%, #b5cbe4 100%)"};

  & + & {
    border-left: 1px solid #5b6c84;
  }
`;

const MenuBar = styled.nav`
  display: flex;
  align-items: center;
  height: 21px;
  padding-left: 4px;
  border-bottom: 1px solid #9c9c9c;
`;

const MenuItem = styled.button`
  height: 20px;
  padding: 0 9px;
  font-size: 11px;
`;

const MdiButtons = styled.div`
  display: flex;
  gap: 1px;
  margin-left: auto;
  margin-right: 1px;
`;

const MdiButton = styled.button`
  display: flex;
  align-items: center;
  justify-content: center;
  width: 18px;
  height: 18px;
  border: 1px solid #98a8ba;
  background: #e1ecf8;
`;

const ToolRow = styled.div`
  display: flex;
  height: ${(p) => (p.$last ? 27 : 28)}px;
  border-top: ${(p) => (p.$last ? 0 : "1px solid #fff")};
  border-bottom: ${(p) => (p.$last ? "2px solid #7a7a7a" : 0)};
`;

const Group = styled.div`
  display: flex;
  align-items: center;
  height: ${(p) => (p.$last ? 25 : 26)}px;
  margin-left: ${(p) => (p.$apart ? 6 : 0)}px;
  padding-right: 1px;
  border-left: ${(p) => (p.$apart ? "1px solid #9c9c9c" : 0)};
  border-right: 1px solid #9c9c9c;
  border-bottom: ${(p) => (p.$last ? 0 : "1px solid #9c9c9c")};
  box-shadow: 1px 1px #fff;
`;

const Grip = styled.span`
  width: 3px;
  height: 19px;
  margin: 0 ${(p) => (p.$wide ? 3 : 1)}px 0 2px;
  background: repeating-linear-gradient(#a8a8a8 0 1px, #efefef 1px 2px);
`;

const Sep = styled.span`
  width: 1px;
  height: 20px;
  margin: 0 ${(p) => (p.$wide ? 3 : 2)}px 0 3px;
  background: #9c9c9c;
`;

const ToolButton = styled.button`
  display: flex;
  align-items: center;
  justify-content: center;
  gap: 3px;
  width: ${(p) => (p.$drop ? 37 : 28)}px;
  height: 23px;
  color: #333;
  font-size: 10px;
  ${(p) =>
    p.$on &&
    css`
      ${pressed}
      width: 25px;
      margin: 0 1px 0 2px;
    `}
`;

const TextTool = styled.button`
  display: flex;
  align-items: center;
  justify-content: center;
  gap: 3px;
  width: ${(p) => p.$width}px;
  height: 23px;
  font-family: ${CHART};
  font-size: 11px;
  white-space: nowrap;
  ${(p) =>
    p.$on &&
    css`
      ${pressed}
      margin-right: 2px;
    `}
`;

const NewsButton = styled.button`
  display: flex;
  align-items: center;
  justify-content: center;
  width: 26px;
  height: 24px;
  margin: 0 2px 0 auto;
  border: 1px solid #a8a8a8;
  background: linear-gradient(#f0f0f0, #d4d4d4);
`;

const ChartWindow = styled.main`
  flex: 1;
  min-height: 0;
  display: grid;
  grid-template-columns: 1fr 40px;
  grid-template-rows: 1fr 17px;
  padding-top: 2px;
  padding-left: 2px;
  background: #fff;
  border-left: 2px solid #8a8a8a;
  border-right: 1px solid #e3e3e3;
  border-bottom: 1px solid #e3e3e3;
  font-family: ${CHART};
  font-size: 9px;
`;

const Plot = styled.div`
  min-width: 0;
  min-height: 0;
  border: 1px solid #000;
`;

const AxisSvg = styled.svg`
  width: 100%;
  height: 100%;
  overflow: visible;
`;

const DateAxis = styled.div`
  grid-column: 1 / -1;
  display: flex;
  overflow: hidden;
`;

const DateLabel = styled.span`
  flex: 0 0 64px;
  line-height: 17px;
  white-space: nowrap;
  background: linear-gradient(#000, #000) 1px 0 / 1px 3px no-repeat;
`;

const TabBar = styled.div`
  display: flex;
  height: 21px;
  margin-top: 1px;
  padding-left: 2px;
  border-top: 1px solid #000;
  border-bottom: 1px solid #fff;
`;

const Tab = styled.button`
  height: 17px;
  padding: 0 11px 0 10px;
  color: ${(p) => (p.$active ? "#000" : "#808080")};
  font-size: 11px;

  ${(p) =>
    p.$rule &&
    css`
      background: linear-gradient(#808080, #808080) 100% 3px / 1px 13px no-repeat;
    `}
  ${(p) =>
    p.$active &&
    css`
      height: 19px;
      margin-top: -1px;
      padding: 0 10px 0 8px;
      background: #fff;
      border: 1px solid #000;
      border-top: 0;
      border-right-width: 2px;
    `}
`;

const TabScroll = styled.div`
  display: flex;
  align-items: center;
  gap: 12px;
  margin-left: auto;
  padding-right: 7px;
`;

const ScrollButton = styled.button`
  display: flex;
`;

const StatusBar = styled.footer`
  display: flex;
  height: 18px;
  padding-top: 3px;
  font-size: 12px;
  line-height: 15px;
`;

const StatusText = styled.span`
  flex: 1;
  padding-left: 2px;
  font-size: 11px;
`;

const StatusCell = styled.span`
  display: flex;
  align-items: center;
  width: ${(p) => p.$width}px;
  padding-left: 5px;
  border-left: 1px solid #a0a0a0;
`;

const Traffic = styled.span`
  margin-left: 44px;
`;
